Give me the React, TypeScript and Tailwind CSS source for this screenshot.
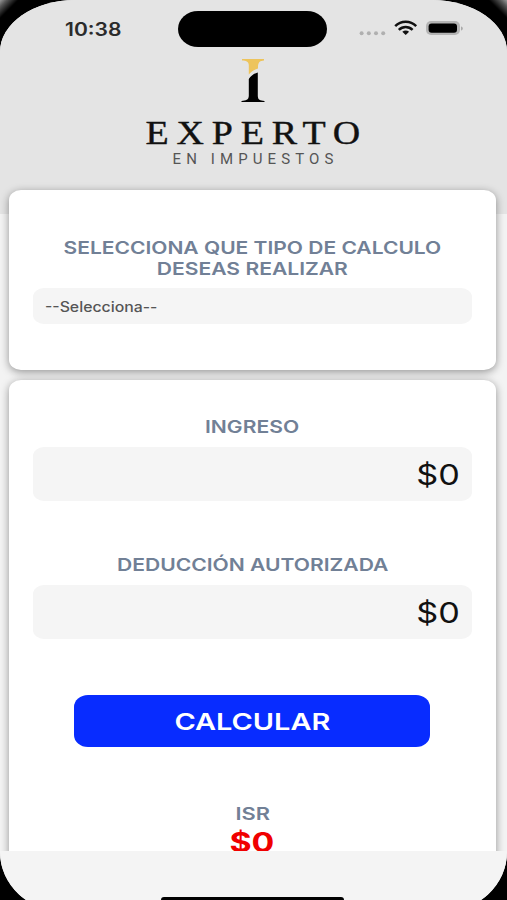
import type { ReactNode } from "react";

const labelClass = "text-[17.5px] font-semibold leading-[21px] text-[#718096]";

// Text drawn wider than its natural proportions
function Wide({ children, className = "" }: { children: ReactNode; className?: string }) {
    return <span className={`inline-block whitespace-nowrap ${className}`}>{children}</span>;
}

function StatusBar() {
    return (
        <div className="flex h-[58px] shrink-0 pt-[11px]">
            <div className="w-[178px] pl-[65px] pt-[6.5px] text-[18px] font-semibold leading-6 text-[#2b2b2b]">
                <Wide className="origin-left scale-x-[1.17]">10:38</Wide>
            </div>
            <div className="h-9 w-[149px] rounded-[20px/18px] bg-black" />
            <svg className="ml-[32px] mt-[8px]" width="105" height="20" viewBox="0 0 105 20">
                <g fill="#b0b0b0">
                    <circle cx="2.6" cy="14.2" r="2" />
                    <circle cx="9.8" cy="14.2" r="2" />
                    <circle cx="17" cy="14.2" r="2" />
                    <circle cx="24.2" cy="14.2" r="2" />
                </g>
                <g fill="none" stroke="#111" strokeWidth="2.5">
                    <path d="M36.200 7.200C42 1.300 51.400 1.300 57.200 7.200" />
                    <path d="M39.800 10.800C43.800 6.900 49.600 6.900 53.600 10.800" />
                </g>
                <path d="M43.300 12.800C45.400 10.900 48 10.900 50.100 12.800L46.700 16Z" fill="#111" />
                <rect x="67" y="2" width="34" height="14" rx="5" fill="#b4b4b4" />
                <rect x="69.600" y="4.400" width="28.400" height="9.300" rx="3" fill="#000" />
                <path d="M102 7.500v4c2.400-.6 2.400-3.400 0-4Z" fill="#aaa" />
            </svg>
        </div>
    );
}

function Logo() {
    return (
        <div className="flex h-[132px] w-[506px] shrink-0 flex-col items-center">
            <svg className="mt-px" width="24" height="44" viewBox="0 0 24 44">
                <path d="M1 0H23V1.500C19 1.800 17.500 3 17 7V9.500C13 10.500 10 13 7.800 15.500V6C7.500 2.500 5 1.700 1 1.500Z" fill="#edc45c" />
                <path d="M16.800 13.500V37C17 41 19 41.700 23.500 41.900V43H.5V41.900C5 41.700 7.500 41 7.800 37V20C10 17 13 14.500 16.800 13.500Z" fill="#000" />
            </svg>
            <div className="mt-[11.5px] pl-[8px] font-['Liberation_Serif',serif] text-[33px] leading-[36px] tracking-[6.8px] text-[#111] [-webkit-text-stroke:0.4px_#111]">
                <Wide className="scale-x-[1.15]">EXPERTO</Wide>
            </div>
            <div className="-mt-[0.5px] pl-[5px] font-[Roboto,sans-serif] text-[15px] leading-[18px] tracking-[5.1px] text-[#555]">
                <Wide>EN IMPUESTOS</Wide>
            </div>
        </div>
    );
}

function MoneyField({ label }: { label: string }) {
    return (
        <div className="flex w-full flex-col items-center">
            <span className={labelClass}>
                <Wide className="scale-x-[1.205]">{label}</Wide>
            </span>
            <div className="mt-[10px] flex h-[54px] w-full items-center justify-end rounded-[11px/9px] bg-[#f5f5f5] pr-[12px] pt-px text-[29px] text-[#111]">
                <Wide className="origin-right scale-x-[1.18]">$0</Wide>
            </div>
        </div>
    );
}

export default function App() {
    return (
        <div className="h-[900px] w-[507px] overflow-hidden bg-black bg-[linear-gradient(135deg,#999_0,#555_5px,transparent_13px),linear-gradient(225deg,#999_0,#555_5px,transparent_13px)] font-[Inter,sans-serif]">
            <div className="flex h-[912px] flex-col overflow-hidden rounded-[75px_75px_65px_65px/52px_52px_60px_60px] bg-[#f3f3f3]">
                <div className="flex h-[851px] shrink-0 flex-col overflow-hidden bg-[linear-gradient(#e4e4e4_214px,#f3f3f3_214px)]">
                    <StatusBar />
                    <Logo />

                    <section className="ml-[9px] flex h-[180px] w-[487px] shrink-0 flex-col items-center rounded-[12px/10px] bg-white px-6 pt-[47px] shadow-[0_2px_8px_rgba(0,0,0,0.4)]">
                        <h1 className={`flex flex-col items-center ${labelClass}`}>
                            <Wide className="scale-x-[1.2]">SELECCIONA QUE TIPO DE CALCULO</Wide>
                            <Wide className="scale-x-[1.205]">DESEAS REALIZAR</Wide>
                        </h1>
                        <div className="mt-[9px] flex h-9 w-full items-center rounded-[11px/9px] bg-[#f5f5f5] pl-[12px] text-[14px] font-medium text-[#555]">
                            <Wide className="origin-left scale-x-[1.13]">--Selecciona--</Wide>
                        </div>
                    </section>

                    <section className="ml-[9px] mt-[10px] flex h-[560px] w-[487px] shrink-0 flex-col items-center rounded-[12px/10px] bg-white px-6 pt-[36px] shadow-[0_2px_8px_rgba(0,0,0,0.4)]">
                        <MoneyField label="INGRESO" />
                        <div className="h-[53px] shrink-0" />
                        <MoneyField label="DEDUCCIÓN AUTORIZADA" />
                        <button className="mr-px mt-[56px] h-[52px] w-[356px] shrink-0 rounded-[14px/12px] bg-[#082cff] pt-px text-[23.500px] font-semibold text-white">
                            <Wide className="scale-x-[1.23]">CALCULAR</Wide>
                        </button>
                        <span className={`mt-[56px] ${labelClass}`}>
                            <Wide className="scale-x-[1.25]">ISR</Wide>
                        </span>
                        <span className="mr-px mt-px text-[27px] font-bold leading-[35px] text-[#f00000]">
                            <Wide className="scale-x-[1.25]">$0</Wide>
                        </span>
                    </section>
                </div>

                <footer className="flex h-[61px] shrink-0 bg-[#f4f4f4] pl-[161px] pt-[46px]">
                    <div className="h-[6px] w-[183px] rounded-[3px] bg-black" />
                </footer>
            </div>
        </div>
    );
}
